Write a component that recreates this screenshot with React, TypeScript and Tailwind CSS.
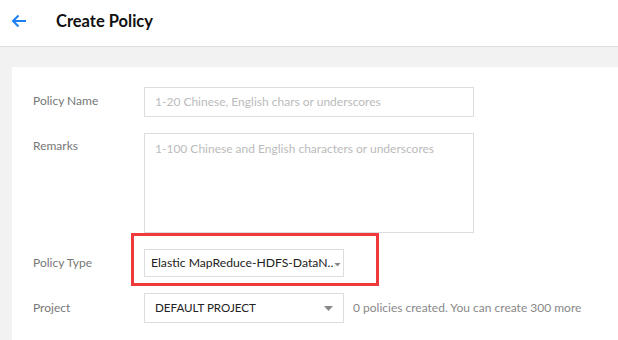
import React from 'react'

const font = { fontFamily: 'Lato, "Noto Sans", sans-serif' }

function Caret({ className = '' }: { className?: string }) {
  return (
    <svg width="9" height="5" viewBox="0 0 9 5" className={className}>
      <path d="M0 0h9L4.5 5z" fill="#888" />
    </svg>
  )
}

export default function App() {
  return (
    <div className="w-[618px] h-[340px] overflow-hidden bg-[#f2f2f2]" style={font}>
      <div className="h-[47px] bg-white border-b border-[#dddddd] flex items-center">
        <svg width="16" height="14" viewBox="0 0 16 14" className="ml-[11px] mt-[-4px]">
          <path d="M15 7H2M7.5 1.5 2 7l5.5 5.5" stroke="#1d7ff5" strokeWidth="2" fill="none" />
        </svg>
        <h1 className="ml-[29px] mt-[-4px] text-[16.5px] font-bold text-[#111]">Create Policy</h1>
      </div>

      <div className="ml-[12px] mt-[20px] bg-white h-[300px] pl-[21px] pt-[20px]">
        <div className="flex">
          <label className="w-[111px] pt-[6px] text-[12px] leading-[16px] text-[#777]">Policy Name</label>
          <div className="w-[330px] h-[30px] border border-[#dddddd] flex items-center px-[10px] text-[12px] text-[#bbb]">
            1-20 Chinese, English chars or underscores
          </div>
        </div>

        <div className="flex mt-[16px]">
          <label className="w-[111px] pt-[5px] text-[12px] leading-[16px] text-[#777]">Remarks</label>
          <div className="w-[330px] h-[100px] border border-[#dddddd] px-[10px] pt-[6px] text-[12px] text-[#bbb]">
            1-100 Chinese and English characters or underscores
          </div>
        </div>

        <div className="flex mt-[16px]">
          <label className="w-[111px] pt-[6px] text-[12px] leading-[16px] text-[#777]">Policy Type</label>
          <div className="relative">
            <div className="w-[200px] h-[28px] border border-[#dddddd] flex items-center pl-[6px] text-[12.2px] text-[#222] whitespace-nowrap">
              <span>Elastic MapReduce-HDFS-DataN..</span>
              <Caret className="mt-[3px] scale-75" />
            </div>
            <div className="absolute left-[-13px] top-[-16px] w-[248px] h-[53px] border-[3px] border-[#f0393c]" />
          </div>
        </div>

        <div className="flex mt-[16px]">
          <label className="w-[111px] pt-[7px] text-[12px] leading-[16px] text-[#777]">Project</label>
          <div className="w-[200px] h-[30px] border border-[#dddddd] flex items-center justify-between pl-[10px] pr-[10px] text-[11.6px] text-[#222]">
            <span>DEFAULT PROJECT</span>
            <Caret />
          </div>
          <span className="ml-[9px] pt-[7px] text-[12px] leading-[16px] text-[#888]">
            0 policies created. You can create 300 more
          </span>
        </div>
      </div>
    </div>
  )
}
